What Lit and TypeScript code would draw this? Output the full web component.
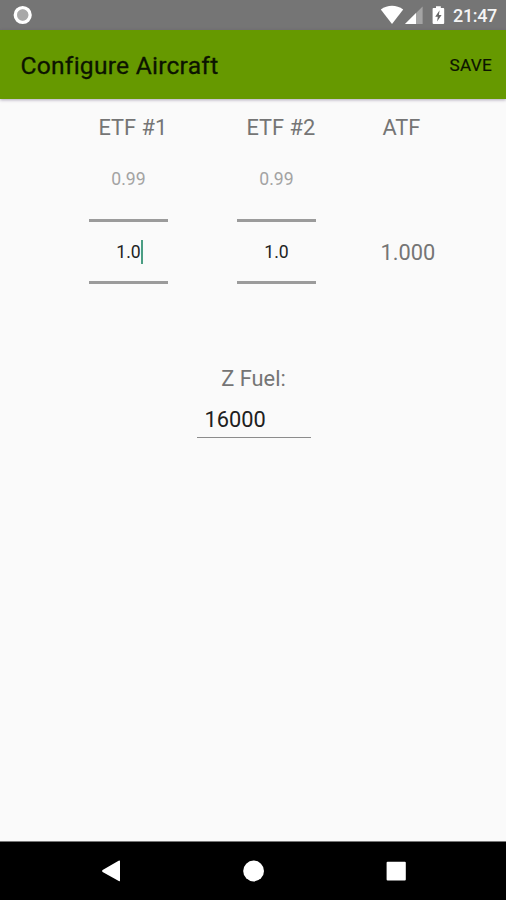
import { LitElement, html, css } from "lit";
import { customElement, property } from "lit/decorators.js";

@customElement("status-bar")
class StatusBar extends LitElement {
  static styles = css`
    :host { display: flex; align-items: center; height: 30px; padding: 0 9px 0 13px; background: #757575; color: #f4f4f4; }
    .spacer { flex: 1; }
    svg { display: block; flex: none; }
    .time { width: 44px; margin-left: 7px; padding-top: 2px; font-size: 18px; font-weight: 500; line-height: 30px; letter-spacing: -0.35px; white-space: nowrap; }
  `;
  render() {
    return html`
      <svg width="20" height="30" viewBox="0 0 20 30">
        <circle cx="9.7" cy="15" r="5.8" fill="#a9a9a9"></circle>
        <circle cx="9.7" cy="15" r="7.4" fill="none" stroke="#fff" stroke-width="3.4"></circle>
      </svg>
      <div class="spacer"></div>
      <svg width="66" height="30" viewBox="0 0 66 30">
        <path d="M0.8 9.6C7.5 4.6 16.5 4.6 23.2 9.6L12 24Z" fill="#fff"></path>
        <path d="M42.6 6.4V24H25Z" fill="#a4a4a4"></path>
        <path d="M36 13V24H25Z" fill="#fff"></path>
        <path d="M53.4 8H56V6.2H60.8V8H63.4Q64.2 8 64.2 9V23Q64.2 24 63.2 24H53.6Q52.6 24 52.6 23V9Q52.6 8 53.4 8Z" fill="#fff"></path>
        <path d="M59.6 10.3L55.2 16.7H57.8L57.1 21.4L61.6 15H58.9Z" fill="#666"></path>
      </svg>
      <div class="time">21:47</div>
    `;
  }
}

@customElement("app-toolbar")
class AppToolbar extends LitElement {
  static styles = css`
    :host { display: flex; align-items: center; justify-content: space-between; height: 68.5px; padding: 0 14px 0 20.5px; background: #669900; color: #0c1400; box-shadow: 0 1px 3px rgba(60, 40, 90, 0.4); position: relative; }
    .title { font-size: 24.6px; line-height: 68px; letter-spacing: 0.24px; padding-top: 3px; -webkit-text-stroke: 0.3px #0c1400; }
    .action { font-size: 17.2px; line-height: 70px; letter-spacing: 0.25px; -webkit-text-stroke: 0.2px #0c1400; padding-top: 1px; }
  `;
  render() {
    return html`<div class="title">Configure Aircraft</div><div class="action">SAVE</div>`;
  }
}

@customElement("number-picker")
class NumberPicker extends LitElement {
  @property() previous = "";
  @property() value = "";
  @property({ type: Boolean }) editing = false;
  static styles = css`
    :host { display: block; width: 79px; text-align: center; font-size: 17.6px; }
    .previous { height: 64px; line-height: 48px; color: #a3a3a3; }
    .value { height: 59px; line-height: 61px; border-top: 3px solid #9b9b9b; border-bottom: 3px solid #9b9b9b; color: #222; }
    .text { position: relative; }
    .caret { position: absolute; left: 100%; top: -2px; width: 2px; height: 24px; background: #4a9d83; }
  `;
  render() {
    return html`
      <div class="previous">${this.previous}</div>
      <div class="value"><span class="text">${this.value}${this.editing ? html`<span class="caret"></span>` : ""}</span></div>
    `;
  }
}

@customElement("nav-bar")
class NavBar extends LitElement {
  static styles = css`
    :host { display: flex; justify-content: center; gap: 118px; align-items: center; height: 58px; background: #000; border-top: 1px solid #777; }
    svg { display: block; }
  `;
  render() {
    return html`
      <svg width="24" height="24" viewBox="0 0 24 24"><path d="M21 2V21.6Q21 22.6 19.8 22L3.6 12.9Q2.4 12 3.6 11.1L19.6 1.8Q21 1 21 2.2Z" fill="#fff"></path></svg>
      <svg width="24" height="24" viewBox="0 0 24 24"><circle cx="12.6" cy="12" r="10.4" fill="#fff"></circle></svg>
      <svg width="24" height="24" viewBox="0 0 24 24"><rect x="3.6" y="2.8" width="19.2" height="18.8" rx="1" fill="#fff"></rect></svg>
    `;
  }
}

@customElement("app-root")
class AppRoot extends LitElement {
  static styles = css`
    :host { display: flex; flex-direction: column; height: 900px; overflow: hidden; background: #fafafa; font-family: Roboto, sans-serif; }
    status-bar, app-toolbar, nav-bar { flex: none; }
    .content { flex: 1; font-size: 21.8px; color: #757575; }
    .factors { display: grid; grid-template-columns: 148px 143.5px 1fr; grid-template-rows: 56.5px 129px; padding-left: 89px; white-space: nowrap; }
    .heading { line-height: 58px; height: 56px; padding-left: 9.5px; }
    .heading.total { padding-left: 2px; }
    .result { align-self: end; line-height: 62px; }
    .fuel { display: flex; flex-direction: column; width: 114px; margin: 78px 0 0 196.5px; }
    .label { line-height: 34px; text-align: center; }
    .field { line-height: 34px; margin-top: 7px; height: 33.5px; padding-left: 8px; border-bottom: 1.5px solid #8c8c8c; color: #202020; }
  `;
  render() {
    return html`
      <status-bar></status-bar>
      <app-toolbar></app-toolbar>
      <div class="content">
        <div class="factors">
          <div class="heading">ETF #1</div>
          <div class="heading">ETF #2</div>
          <div class="heading total">ATF</div>
          <number-picker previous="0.99" value="1.0" editing></number-picker>
          <number-picker previous="0.99" value="1.0"></number-picker>
          <div class="result">1.000</div>
        </div>
        <div class="fuel">
          <div class="label">Z Fuel:</div>
          <div class="field">16000</div>
        </div>
      </div>
      <nav-bar></nav-bar>
    `;
  }
}
